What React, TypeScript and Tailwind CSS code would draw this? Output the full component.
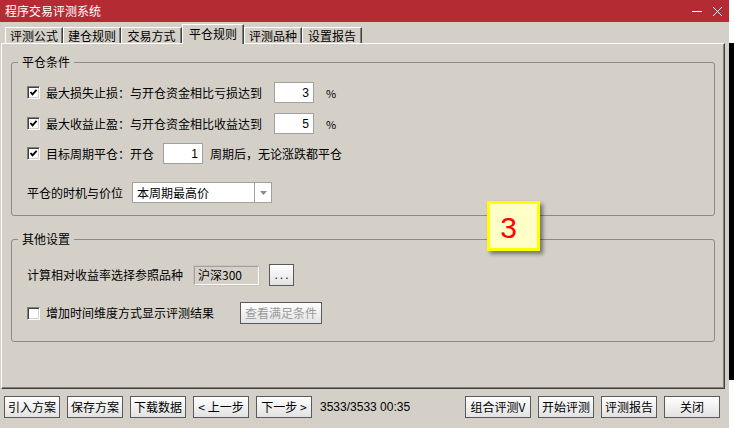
import React from "react";

function Check({ checked }: { checked: boolean }) {
  return (
    <span className="w-[13px] h-[13px] shrink-0 bg-white border border-t-[#808080] border-l-[#808080] border-r-white border-b-white shadow-[inset_1px_1px_0_#404040,inset_-1px_-1px_0_#d4d0c8] flex items-center justify-center">
      {checked && (
        <svg width="11" height="11" viewBox="0 0 11 11">
          <path d="M2.5 5 L4.5 7.3 L8.6 2.8" stroke="#000" strokeWidth="1.9" fill="none" />
        </svg>
      )}
    </span>
  );
}

function NumBox({ v, w }: { v: string; w: string }) {
  return (
    <span className={`${w} h-[21px] bg-white border border-[#a0a0a0] flex items-center justify-end pr-[4px] text-[12px] leading-[14px] font-['Liberation_Sans',sans-serif]`}>
      {v}
    </span>
  );
}

function Btn({ children, w, disabled }: { children: React.ReactNode; w: string; disabled?: boolean }) {
  return (
    <span
      className={`${w} h-[22px] shrink-0 border border-[#5a5a5a] bg-gradient-to-b from-white to-[#e2e2e2] flex items-center justify-center text-[12px] leading-[14px] ${
        disabled ? "text-[#9a9a9a]" : "text-black"
      }`}
    >
      {children}
    </span>
  );
}

function Tab({ label, w, active }: { label: string; w: string; active?: boolean }) {
  if (active) {
    return (
      <div
        className={`${w} h-[20px] -mb-px relative z-10 bg-[#d4d0c8] border-t border-l border-white border-r border-r-[#404040] shadow-[inset_-1px_0_0_#808080] flex items-center justify-center pb-[2px] text-[12px] leading-[14px]`}
      >
        {label}
      </div>
    );
  }
  return (
    <div
      className={`${w} h-[16px] bg-[#d4d0c8] border-t border-l border-white border-r border-r-[#404040] shadow-[inset_-1px_0_0_#808080] flex items-center justify-center text-[12px] leading-[14px]`}
    >
      {label}
    </div>
  );
}

export default function App() {
  return (
    <div className="w-[734px] h-[428px] flex relative overflow-hidden font-['Noto_Sans_CJK_SC',sans-serif] text-black">
      {/* main window */}
      <div className="w-[729px] h-[428px] flex flex-col bg-[#d4d0c8]">
        {/* title bar */}
        <div className="h-[22px] shrink-0 bg-[#b52b33] flex items-center pl-[5px] pr-[6px]">
          <span className="text-white text-[12px] leading-[14px]">程序交易评测系统</span>
          <div className="flex-1" />
          <svg width="12" height="12" viewBox="0 0 12 12" className="mr-[9px]">
            <path d="M1 6.5 H11" stroke="#fff" strokeWidth="1" />
          </svg>
          <svg width="11" height="11" viewBox="0 0 11 11">
            <path d="M1 1 L10 10 M10 1 L1 10" stroke="#fff" strokeWidth="1" />
          </svg>
        </div>

        {/* tabs */}
        <div className="h-[21px] shrink-0 flex items-end pl-[5px]">
          <Tab label="评测公式" w="w-[58px]" />
          <Tab label="建仓规则" w="w-[58px]" />
          <Tab label="交易方式" w="w-[61px]" />
          <Tab label="平仓规则" w="w-[62px]" active />
          <Tab label="评测品种" w="w-[58px]" />
          <Tab label="设置报告" w="w-[60px]" />
        </div>

        {/* tab panel */}
        <div className="ml-[1px] w-[724px] h-[346px] shrink-0 border-t border-l border-white border-r border-b border-r-[#404040] border-b-[#404040] shadow-[inset_-1px_-1px_0_#808080] pl-[9px] pr-[9px] pt-[11px] flex flex-col">
          {/* group 1 */}
          <fieldset className="border border-[#8a8a8a] rounded-[3px] pb-[12px]">
            <legend className="ml-[6px] px-[4px] text-[12px] leading-[14px]">平仓条件</legend>
            <div className="pl-[15px] pt-[13px] flex flex-col text-[12px] leading-[14px]">
              <div className="h-[21px] flex items-center">
                <Check checked />
                <span className="ml-[6px]">最大损失止损：与开仓资金相比亏损达到</span>
                <span className="ml-[12px]">
                  <NumBox v="3" w="w-[40px]" />
                </span>
                <span className="ml-[12px] text-[11px]">%</span>
              </div>
              <div className="h-[21px] mt-[10px] flex items-center">
                <Check checked />
                <span className="ml-[6px]">最大收益止盈：与开仓资金相比收益达到</span>
                <span className="ml-[12px]">
                  <NumBox v="5" w="w-[40px]" />
                </span>
                <span className="ml-[12px] text-[11px]">%</span>
              </div>
              <div className="h-[21px] mt-[9px] flex items-center">
                <Check checked />
                <span className="ml-[6px]">目标周期平仓：开仓</span>
                <span className="ml-[9px]">
                  <NumBox v="1" w="w-[40px]" />
                </span>
                <span className="ml-[7px]">周期后，无论涨跌都平仓</span>
              </div>
              <div className="h-[21px] mt-[18px] flex items-center">
                <span>平仓的时机与价位</span>
                <div className="ml-[9px] w-[140px] h-[21px] bg-white border border-[#a0a0a0] flex items-center">
                  <span className="flex-1 pl-[4px]">本周期最高价</span>
                  <span className="w-[17px] h-full border-l border-[#a0a0a0] flex items-center justify-center">
                    <svg width="7" height="4" viewBox="0 0 7 4">
                      <path d="M0 0 H7 L3.5 4 Z" fill="#8a8a8a" />
                    </svg>
                  </span>
                </div>
              </div>
            </div>
          </fieldset>

          {/* group 2 */}
          <fieldset className="mt-[16px] border border-[#8a8a8a] rounded-[3px] pb-[18px]">
            <legend className="ml-[6px] px-[4px] text-[12px] leading-[14px]">其他设置</legend>
            <div className="pl-[15px] pt-[19px] flex flex-col text-[12px] leading-[14px]">
              <div className="h-[20px] flex items-center">
                <span>计算相对收益率选择参照品种</span>
                <span className="ml-[11px] w-[65px] h-[19px] bg-[#d4d0c8] border border-t-[#a0a0a0] border-l-[#a0a0a0] border-r-white border-b-white shadow-[0_0_0_1px_#c8c4bc] flex items-center pl-[3px]">
                  沪深300
                </span>
                <span className="ml-[10px]">
                  <Btn w="w-[25px]">
                    <span className="font-['Liberation_Sans',sans-serif] tracking-[2px] pl-[2px]">...</span>
                  </Btn>
                </span>
              </div>
              <div className="h-[20px] mt-[18px] flex items-center">
                <Check checked={false} />
                <span className="ml-[6px]">增加时间维度方式显示评测结果</span>
                <span className="ml-[26px]">
                  <Btn w="w-[82px]" disabled>
                    查看满足条件
                  </Btn>
                </span>
              </div>
            </div>
          </fieldset>
        </div>

        {/* bottom bar */}
        <div className="flex-1 flex items-start pt-[7px] pl-[4px] pr-[9px]">
          <div className="flex gap-[7px]">
            <Btn w="w-[56px]">引入方案</Btn>
            <Btn w="w-[56px]">保存方案</Btn>
            <Btn w="w-[56px]">下载数据</Btn>
            <Btn w="w-[56px]">&lt; 上一步</Btn>
            <Btn w="w-[56px]">下一步 &gt;</Btn>
          </div>
          <span className="ml-[8px] h-[22px] flex items-center text-[12px] leading-[14px] font-['Liberation_Sans',sans-serif]">
            3533/3533 00:35
          </span>
          <div className="flex-1" />
          <div className="flex gap-[7px]">
            <Btn w="w-[66px]">组合评测V</Btn>
            <Btn w="w-[56px]">开始评测</Btn>
            <Btn w="w-[56px]">评测报告</Btn>
            <Btn w="w-[56px]">关闭</Btn>
          </div>
        </div>
      </div>

      {/* right strip */}
      <div className="w-[5px] h-[428px] flex flex-col">
        <div className="h-[43px] bg-white" />
        <div className="h-[337px] bg-black" />
        <div className="flex-1 bg-white" />
      </div>

      {/* yellow note overlay */}
      <div className="absolute left-[487px] top-[201px] w-[53px] h-[50px] border-[3px] border-[#ffff00] bg-[#ffffc8] shadow-[3px_3px_4px_rgba(0,0,0,0.45)] flex items-center justify-center pr-[10px] pt-[4px]">
        <span className="text-[30px] leading-[30px] text-[#ff0000] font-['Liberation_Sans',sans-serif]">3</span>
      </div>
    </div>
  );
}
